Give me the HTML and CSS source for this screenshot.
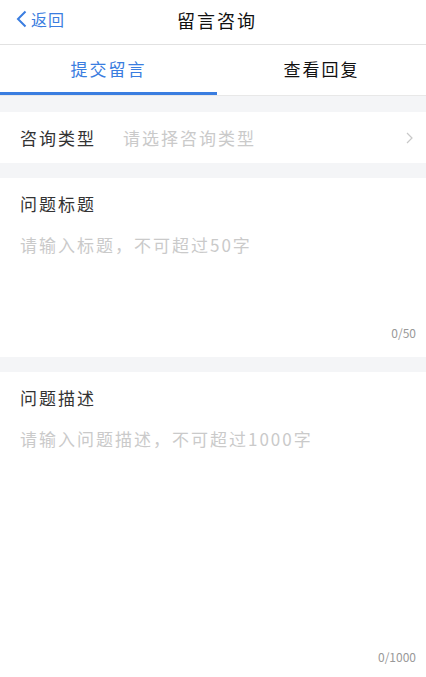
FILE: index.html
```html
<!doctype html>
<html lang="zh">

<head>
    <meta charset="utf-8" />
    <meta name="viewport" content="width=device-width, initial-scale=1" />
    <title>留言咨询</title>
    <link rel="stylesheet" href="styles.css">
</head>

<body>
    <header class="nav">
        <a class="back">
            <svg width="11" height="18" viewBox="0 0 11 18"><path d="M9.5 1.5 L2 9 L9.5 16.5" fill="none" stroke="#3a7de0" stroke-width="2"/></svg>
            <span>返回</span>
        </a>
        <h1 class="title">留言咨询</h1>
    </header>

    <div class="tabs">
        <div class="tab active">提交留言</div>
        <div class="tab">查看回复</div>
    </div>

    <div class="row">
        <span class="label">咨询类型</span>
        <span class="hint">请选择咨询类型</span>
        <svg class="arrow" width="7" height="12" viewBox="0 0 7 12"><path d="M1 1 L6 6 L1 11" fill="none" stroke="#c8c8c8" stroke-width="1.2"/></svg>
    </div>

    <section class="field short">
        <div class="label">问题标题</div>
        <div class="hint">请输入标题，不可超过50字</div>
        <div class="count">0/50</div>
    </section>

    <section class="field long">
        <div class="label">问题描述</div>
        <div class="hint">请输入问题描述，不可超过1000字</div>
        <div class="count">0/1000</div>
    </section>
</body>

</html>
```

FILE: styles.css
```css
body {
    margin: 0;
    background-color: #f4f5f7;
    font-family: "Noto Sans CJK SC", "Noto Sans", sans-serif;
    color: #222;
}

.nav {
    height: 45px;
    box-sizing: border-box;
    padding: 0 0 5px 8px;
    background-color: #fff;
    border-bottom: 1px solid #e2e2e2;
    display: flex;
    align-items: center;
    justify-content: center;
    position: relative;
}

.back {
    position: absolute;
    left: 16px;
    top: 7px;
    display: flex;
    align-items: center;
    gap: 4px;
    color: #3a7de0;
    font-size: 16px;
    letter-spacing: 1px;
}

.title {
    margin: 0;
    font-size: 18px;
    font-weight: normal;
    letter-spacing: 2px;
    color: #111;
}

.tabs {
    display: flex;
    height: 50px;
    background-color: #fff;
    border-bottom: 1px solid #e8e8e8;
}

.tab {
    flex: 1;
    display: flex;
    align-items: center;
    justify-content: center;
    font-size: 17px;
    letter-spacing: 2px;
    color: #111;
    border-bottom: 3px solid transparent;
}

.tab.active {
    flex: 1.04;
    color: #3a7de0;
    border-bottom-color: #3a7de0;
}

.row {
    margin-top: 16px;
    height: 51px;
    background-color: #fff;
    display: flex;
    align-items: center;
    padding: 0 13px 0 20px;
}

.row .label {
    font-size: 17px;
    letter-spacing: 2px;
    color: #333;
    width: 103px;
}

.row .hint {
    flex: 1;
}

.hint {
    font-size: 17px;
    letter-spacing: 2px;
    color: #cacaca;
}

.field {
    margin-top: 15px;
    background-color: #fff;
    padding: 13px 10px 0 20px;
    display: flex;
    flex-direction: column;
}

.field .label {
    font-size: 17px;
    letter-spacing: 2px;
    color: #333;
}

.field .hint {
    margin-top: 16px;
    flex: 1;
}

.field.short {
    height: 166px;
}

.field.long {
    height: 292px;
}

.count {
    align-self: flex-end;
    font-size: 12px;
    color: #999;
    padding-bottom: 16px;
}

.field.long .count {
    padding-bottom: 12px;
}
```
